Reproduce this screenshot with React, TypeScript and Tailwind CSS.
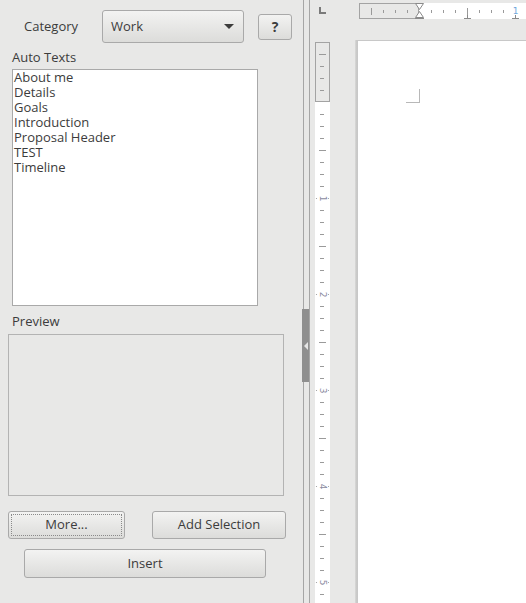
import React from "react";

const autoTexts = ["About me", "Details", "Goals", "Introduction", "Proposal Header", "TEST", "Timeline"];

const font = { fontFamily: '"Open Sans", "Noto Sans", sans-serif' };

function Btn({ children, className = "", focus = false }: { children: React.ReactNode; className?: string; focus?: boolean }) {
  return (
    <div
      className={`flex items-center justify-center rounded-[3px] border border-[#a9a9a9] bg-gradient-to-b from-[#f3f3f2] to-[#dcdcda] text-[13px] text-[#3c3c3c] ${className}`}
    >
      {focus ? (
        <div className="flex h-[calc(100%-4px)] w-[calc(100%-4px)] items-center justify-center border border-dotted border-[#8a8a8a]">
          {children}
        </div>
      ) : (
        children
      )}
    </div>
  );
}

function TopRuler() {
  const ticks = [371, 383, 395, 407, 431, 443, 455, 467, 479, 491, 503].map(x => x - 359);
  const long = [371, 467].map(x => x - 359);
  return (
    <svg width="167" height="16" className="block">
      <rect x="0.5" y="0.5" width="59" height="15" fill="#e8e8e7" stroke="#a3a3a3" />
      <rect x="60" y="0" width="107" height="16" fill="#ffffff" />
      {ticks.map(x => (
        <line
          key={x}
          x1={x + 0.5}
          x2={x + 0.5}
          y1={long.includes(x) ? 5 : 7}
          y2={long.includes(x) ? 12 : 10}
          stroke="#9a9a9a"
        />
      ))}
      {/* tab stops */}
      {[467 - 359, 515 - 359].map(x => (
        <g key={x} stroke="#8a8a8a">
          <line x1={x + 0.5} x2={x + 0.5} y1="12" y2="15" />
          <line x1={x - 3} x2={x + 4} y1="15.5" y2="15.5" />
        </g>
      ))}
      <text x="156.5" y="11" fontSize="9" fill="#6fa8dc" textAnchor="middle" fontFamily="DejaVu Sans, sans-serif">
        1
      </text>
      {/* indent marker */}
      <path d="M56.5 0.5 H64.5 L60.5 6.5 Z" fill="#fff" stroke="#8a8a8a" />
      <path d="M60.5 8.5 L64.5 14.5 H56.5 Z" fill="#fff" stroke="#8a8a8a" />
      <line x1="56" x2="65" y1="15.5" y2="15.5" stroke="#8a8a8a" />
    </svg>
  );
}

function SideRuler() {
  const items: React.ReactNode[] = [];
  for (let y = 54; y < 603; y += 12) {
    if (y === 102) continue;
    const rel = y - 42;
    const k = (y - 102) / 12;
    if (k > 0 && k % 8 === 0) {
      items.push(
        <g key={y}>
          <circle cx="1.5" cy={rel + 0.5} r="0.6" fill="#999" />
          <circle cx="13.5" cy={rel + 0.5} r="0.6" fill="#999" />
          <text
            x="0"
            y="0"
            fontSize="9"
            fill="#8a8aa0"
            fontFamily="DejaVu Sans, sans-serif"
            textAnchor="middle"
            transform={`translate(4.5 ${rel + 0.5}) rotate(90)`}
          >
            {k / 8}
          </text>
        </g>
      );
    } else {
      const isLong = ((y - 102) / 12) % 4 === 0;
      items.push(
        <line
          key={y}
          x1={isLong ? 4 : 5}
          x2={isLong ? 11 : 9}
          y1={rel + 0.5}
          y2={rel + 0.5}
          stroke="#9a9a9a"
        />
      );
    }
  }
  return (
    <svg width="15" height="561" className="block">
      <rect x="0" y="0" width="15" height="561" fill="#ffffff" />
      <rect x="0.5" y="0.5" width="14" height="59" fill="#e8e8e7" stroke="#a3a3a3" />
      {items}
    </svg>
  );
}

export default function App() {
  return (
    <div className="flex h-[603px] w-[526px] overflow-hidden bg-[#e8e8e7] text-[#3c3c3c]" style={font}>
      {/* Left: auto text panel */}
      <div className="flex w-[302px] shrink-0 flex-col text-[13px]">
        <div className="mt-[10px] flex h-[33px] items-center">
          <div className="w-[102px] pl-[24px] pt-[1px]">Category</div>
          <div className="flex h-[33px] w-[142px] items-center justify-between rounded-[3px] border border-[#a9a9a9] bg-gradient-to-b from-[#f3f3f2] to-[#dcdcda] pl-[8px] pr-[9px]">
            <span className="pt-[1px]">Work</span>
            <svg width="10" height="5" viewBox="0 0 10 5">
              <path d="M0 0 H10 L5 5 Z" fill="#3c3c3c" />
            </svg>
          </div>
          <Btn className="ml-[14px] h-[26px] w-[34px] font-bold text-[14px]">?</Btn>
        </div>

        <div className="mt-[7px] pl-[12px] leading-[15px]">Auto Texts</div>
        <div className="ml-[12px] mt-[4px] h-[237px] w-[246px] border border-[#a9a9a9] bg-white pl-[1px]">
          {autoTexts.map(t => (
            <div key={t} className="leading-[15px]">
              {t}
            </div>
          ))}
        </div>

        <div className="mt-[8px] pl-[12px] leading-[15px]">Preview</div>
        <div className="ml-[8px] mt-[5px] h-[162px] w-[276px] border border-[#b3b3b3]" />

        <div className="mt-[15px] flex pl-[8px]">
          <Btn focus className="h-[28px] w-[117px]">
            More...
          </Btn>
          <Btn className="ml-[27px] h-[28px] w-[134px]">Add Selection</Btn>
        </div>
        <div className="mt-[10px] pl-[24px]">
          <Btn className="h-[29px] w-[242px]">Insert</Btn>
        </div>
      </div>

      {/* Splitter */}
      <div className="relative flex w-[13px] shrink-0">
        <div className="ml-[1px] w-px bg-[#a6a6a6]" />
        <div className="ml-[5px] w-px bg-[#a6a6a6]" />
        <div className="absolute left-0 top-[309px] flex h-[73px] w-[7px] items-center justify-center bg-[#8f8f8f]">
          <svg width="4" height="8" viewBox="0 0 4 8">
            <path d="M4 0 V8 L0 4 Z" fill="#e6e6e6" />
          </svg>
        </div>
      </div>

      {/* Document view */}
      <div className="flex flex-1 flex-col">
        <div className="flex h-[42px]">
          <div className="w-[44px] shrink-0 pl-[4px] pt-[7px]">
            <svg width="8" height="8" viewBox="0 0 8 8">
              <path d="M0 0 H2 V5 H7 V7 H0 Z" fill="#7a7a7a" />
            </svg>
          </div>
          <div className="pt-[3px]">
            <TopRuler />
          </div>
        </div>
        <div className="flex flex-1">
          <SideRuler />
          <div className="mt-[-2px] ml-[25px] w-[2px] bg-gradient-to-r from-[#d9d9d8] to-[#c6c6c5]" />
          <div className="relative -mt-[2px] flex-1 border-l border-t border-[#c8c8c8] bg-white">
            <div className="absolute left-[48px] top-[48px] h-[14px] w-[14px] border-b border-r border-[#b8b8b8]" />
          </div>
        </div>
      </div>
    </div>
  );
}
